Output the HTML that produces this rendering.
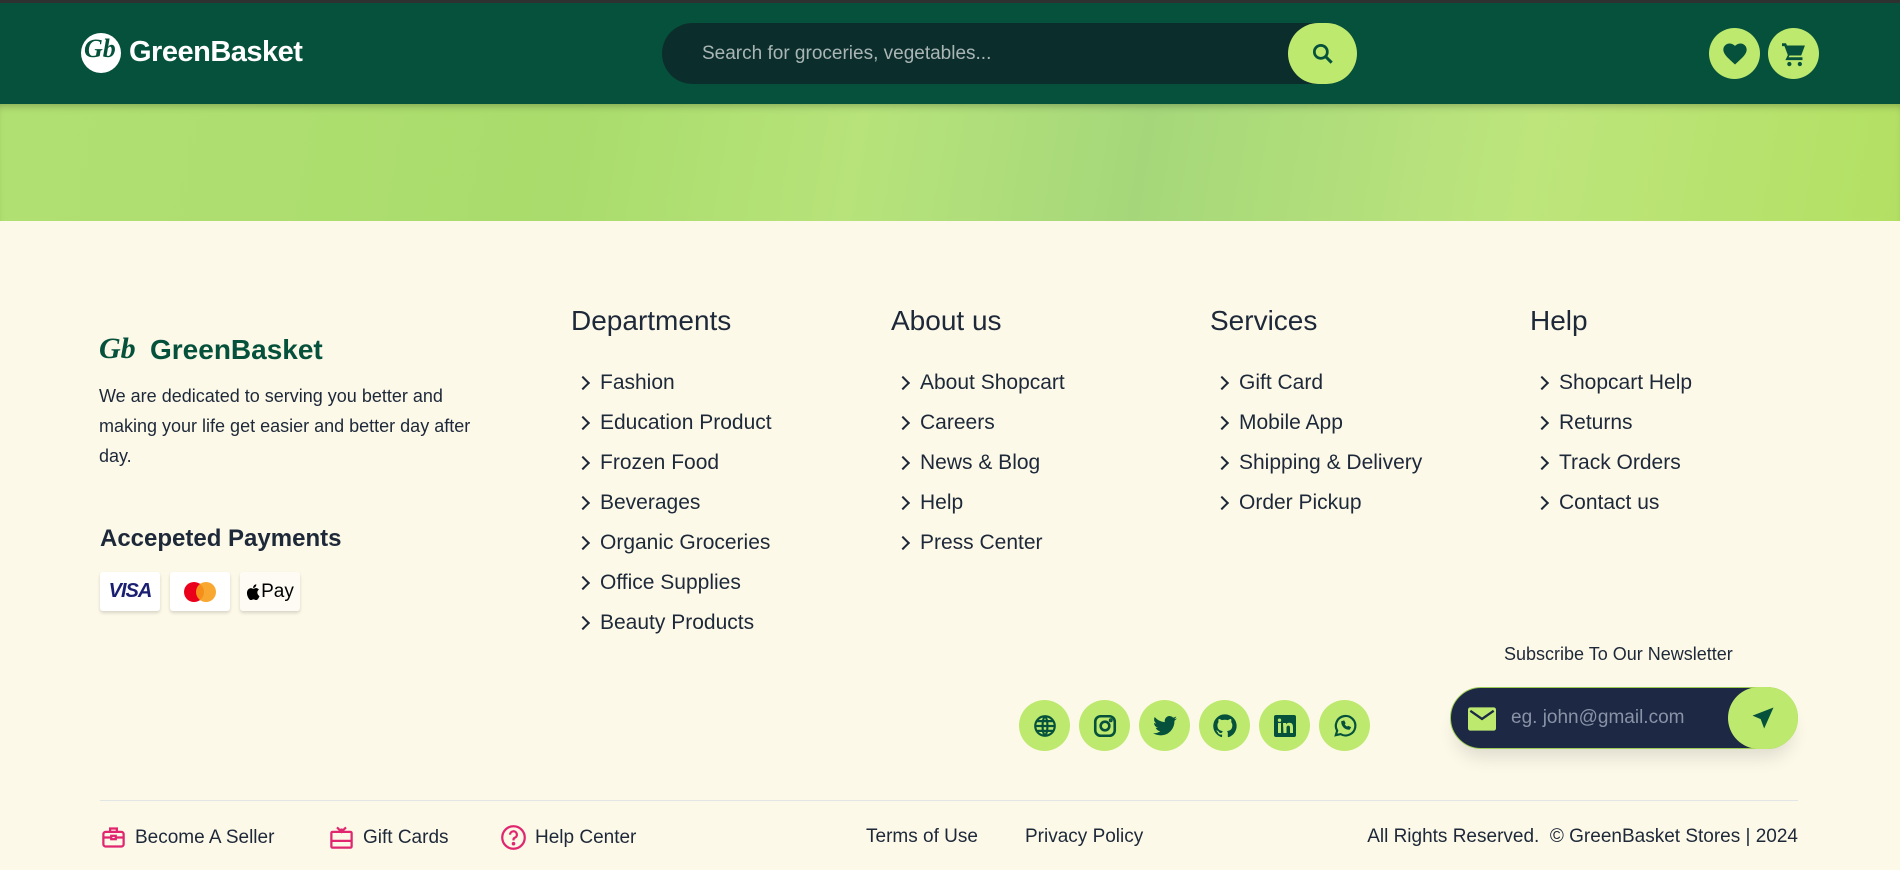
<!DOCTYPE html>
<html><head><meta charset="utf-8"><style>
*{margin:0;padding:0;box-sizing:border-box}
body{width:1900px;height:870px;overflow:hidden;background:#fdf9e9;font-family:"Liberation Sans",sans-serif;color:#1d2838;position:relative}
.abs{position:absolute}
.top{left:0;top:0;width:1900px;height:3px;background:#2d3130}
header{left:0;top:3px;width:1900px;height:101px;background:#06513b}
.banner{left:0;top:104px;width:1900px;height:117px;background:linear-gradient(100deg,#b1e072 0%,#a9dc6c 30%,#b7e37a 45%,#a5d77a 60%,#bde57c 80%,#b3e063 100%);box-shadow:inset 0 6px 8px -4px rgba(0,0,0,.25)}
.search{left:662px;top:23px;width:695px;height:61px;border-radius:31px;background:#0b2e2c}
.search span{position:absolute;left:40px;top:20px;font-size:19px;color:#aab5b5}
.sbtn{left:1288px;top:23px;width:69px;height:61px;border-radius:31px;background:#bde96f;display:flex;align-items:center;justify-content:center}
.circ{border-radius:50%;background:#bde96f;display:flex;align-items:center;justify-content:center}
h3{position:absolute;font-weight:normal;font-size:28px;top:305px}
ul{position:absolute;list-style:none;top:363px;font-size:21px}
li{height:40px;display:flex;align-items:center}
li:before{content:"";width:8px;height:8px;border-right:2px solid #1d2838;border-top:2px solid #1d2838;transform:rotate(45deg);margin:0 12px 0 -3px}
.card{top:572px;width:60px;height:39px;background:#fff;border-radius:3px;box-shadow:0 2px 3px rgba(0,0,0,.15);display:flex;align-items:center;justify-content:center}
.bot{top:824px;font-size:19px;display:flex;align-items:center;gap:8px}
</style></head><body>
<div class="abs top"></div>
<header class="abs"></header>
<div class="abs" style="left:81px;top:33px;width:40px;height:40px;border-radius:50%;background:#fff"></div>
<div class="abs" style="left:84px;top:34px;font-family:'Liberation Serif',serif;font-style:italic;font-weight:bold;font-size:26px;color:#06513b">Gb</div>
<div class="abs" style="left:129px;top:36px;font-size:29px;font-weight:bold;color:#fff;letter-spacing:-0.5px">GreenBasket</div>
<div class="abs search"><span>Search for groceries, vegetables...</span></div>
<div class="abs sbtn"><svg width="26" height="26" viewBox="0 0 24 24"><circle cx="10" cy="10" r="6" fill="none" stroke="#06513b" stroke-width="2.5"/><path d="M14.5 14.5L20 20" stroke="#06513b" stroke-width="2.8"/></svg></div>
<div class="abs circ" style="left:1709px;top:28px;width:51px;height:51px"><svg width="28" height="28" viewBox="0 0 24 24"><path d="M12 21l-1.4-1.3C5.4 15 2 12 2 8.3 2 5.4 4.3 3 7.3 3c1.7 0 3.3.8 4.7 2 1.4-1.2 3-2 4.7-2C19.7 3 22 5.4 22 8.3c0 3.7-3.4 6.7-8.6 11.4z" fill="#06513b"/></svg></div>
<div class="abs circ" style="left:1768px;top:28px;width:51px;height:51px"><svg width="28" height="28" viewBox="0 0 24 24"><path d="M2 3h3l.8 2H21l-3 8H8l-1 2h12v2H5l2-4L4 5H2z M8 19a1.6 1.6 0 1 0 .01 0M17 19a1.6 1.6 0 1 0 .01 0" fill="#06513b" stroke="#06513b" stroke-width=".5"/></svg></div>
<div class="abs banner"></div>

<div class="abs" style="left:99px;top:332px;font-family:'Liberation Serif',serif;font-style:italic;font-weight:bold;font-size:30px;color:#06513b">Gb</div>
<div class="abs" style="left:150px;top:334px;font-size:28px;font-weight:bold;color:#06513b">GreenBasket</div>
<div class="abs" style="left:99px;top:381px;width:395px;font-size:18px;line-height:30px">We are dedicated to serving you better and making your life get easier and better day after day.</div>
<div class="abs" style="left:100px;top:525px;font-size:24px;font-weight:bold">Accepeted Payments</div>
<div class="abs card" style="left:100px"><span style="font-weight:bold;font-style:italic;color:#1a1f71;font-size:20px;letter-spacing:-1px">VISA</span></div>
<div class="abs card" style="left:170px"><svg width="40" height="26"><circle cx="14" cy="13" r="10" fill="#eb001b"/><circle cx="26" cy="13" r="10" fill="#f79e1b" opacity=".9"/></svg></div>
<div class="abs card" style="left:240px;background:#fdfbf3"><svg width="14" height="16" viewBox="0 0 14 17"><path d="M11.6 9c0-2 1.6-2.9 1.7-3-1-1.4-2.4-1.6-2.9-1.6-1.2-.1-2.4.7-3 .7s-1.6-.7-2.6-.7C3.400 4.5 2 5.300 1.300 6.600c-1.500 2.600-.4 6.400 1 8.500.7 1 1.500 2.100 2.600 2 1-.0 1.400-.7 2.700-.7s1.600.7 2.700.7c1.100 0 1.800-1 2.500-2 .8-1.200 1.100-2.300 1.100-2.400 0 0-2.100-.8-2.300-3.700zM9.600 3c.6-.7 1-1.700.9-2.700-.9 0-1.900.6-2.500 1.300-.5.600-1 1.600-.9 2.600 1 .1 1.900-.5 2.500-1.200z" fill="#000"/></svg><span style="font-size:19px;color:#000;margin-left:1px">Pay</span></div>

<h3 style="left:571px">Departments</h3>
<ul style="left:581px"><li>Fashion</li><li>Education Product</li><li>Frozen Food</li><li>Beverages</li><li>Organic Groceries</li><li>Office Supplies</li><li>Beauty Products</li></ul>
<h3 style="left:891px">About us</h3>
<ul style="left:901px"><li>About Shopcart</li><li>Careers</li><li>News &amp; Blog</li><li>Help</li><li>Press Center</li></ul>
<h3 style="left:1210px">Services</h3>
<ul style="left:1220px"><li>Gift Card</li><li>Mobile App</li><li>Shipping &amp; Delivery</li><li>Order Pickup</li></ul>
<h3 style="left:1530px">Help</h3>
<ul style="left:1540px"><li>Shopcart Help</li><li>Returns</li><li>Track Orders</li><li>Contact us</li></ul>

<div class="abs" style="left:1504px;top:644px;font-size:18px">Subscribe To Our Newsletter</div>
<div class="abs" style="left:1450px;top:687px;width:348px;height:62px;border-radius:31px;background:#1c2844;border:1.5px solid #9ccb55;box-shadow:0 14px 18px -6px rgba(0,0,0,.12)">
<svg class="abs" style="left:17px;top:19px" width="28" height="24" viewBox="0 0 24 20"><rect x="0" y="0" width="24" height="20" rx="2" fill="#bde96f"/><path d="M2 3l10 7 10-7" fill="none" stroke="#1c2844" stroke-width="2"/></svg>
<span class="abs" style="left:60px;top:19px;font-size:19px;color:#8a93a6">eg. john@gmail.com</span></div>
<div class="abs circ" style="left:1728px;top:687px;width:70px;height:62px;border-radius:31px"><svg width="28" height="28" viewBox="0 0 24 24"><path d="M21 3L3 10l7 3 3 8z" fill="#06513b"/></svg></div>

<div class="abs circ" style="left:1019px;top:700px;width:51px;height:51px"><svg width="26" height="26" viewBox="0 0 24 24" fill="none" stroke="#06513b" stroke-width="2"><circle cx="12" cy="12" r="9"/><path d="M3 12h18M12 3c3 3 3 15 0 18M12 3c-3 3-3 15 0 18M4.5 7.5h15M4.5 16.5h15"/></svg></div>
<div class="abs circ" style="left:1079px;top:700px;width:51px;height:51px"><svg width="26" height="26" viewBox="0 0 24 24" fill="none" stroke="#06513b" stroke-width="2.4"><rect x="3" y="3" width="18" height="18" rx="5"/><circle cx="12" cy="12" r="4"/><circle cx="17.3" cy="6.7" r=".6" fill="#06513b"/></svg></div>
<div class="abs circ" style="left:1139px;top:700px;width:51px;height:51px"><svg width="26" height="26" viewBox="0 0 24 24"><path d="M23 5c-.8.4-1.7.6-2.6.7.9-.6 1.6-1.4 2-2.5-.9.5-1.9.9-2.9 1.1A4.5 4.5 0 0 0 11.8 8.4 12.8 12.8 0 0 1 2.5 3.7a4.5 4.5 0 0 0 1.4 6c-.7 0-1.4-.2-2-.6 0 2.2 1.6 4 3.6 4.4-.7.2-1.4.2-2 .1.6 1.8 2.2 3.1 4.2 3.1A9 9 0 0 1 1 18.6 12.8 12.8 0 0 0 7.9 20.6c8.3 0 12.8-6.9 12.8-12.8v-.6c.9-.6 1.7-1.4 2.300-2.2z" fill="#06513b"/></svg></div>
<div class="abs circ" style="left:1199px;top:700px;width:51px;height:51px"><svg width="28" height="28" viewBox="0 0 24 24"><path d="M12 2a10 10 0 0 0-3.2 19.5c.5.1.7-.2.7-.5v-1.7c-2.8.6-3.4-1.3-3.4-1.3-.5-1.2-1.1-1.5-1.1-1.5-.9-.6.1-.6.1-.6 1 .1 1.5 1 1.5 1 .9 1.5 2.3 1.1 2.9.8.1-.6.4-1.1.6-1.3-2.2-.3-4.6-1.1-4.6-5 0-1.1.4-2 1-2.7-.1-.3-.4-1.3.1-2.7 0 0 .8-.3 2.8 1a9.6 9.6 0 0 1 5 0c1.9-1.3 2.8-1 2.8-1 .5 1.4.2 2.4.1 2.7.6.7 1 1.6 1 2.7 0 3.9-2.3 4.7-4.6 5 .4.3.7.9.7 1.9V21c0 .3.2.6.7.5A10 10 0 0 0 12 2z" fill="#06513b"/></svg></div>
<div class="abs circ" style="left:1259px;top:700px;width:51px;height:51px"><svg width="24" height="24" viewBox="0 0 24 24"><rect x="1" y="1" width="22" height="22" rx="2" fill="#06513b"/><path d="M5 9h3v10H5zM6.5 4.5a1.7 1.7 0 1 1 0 3.4 1.7 1.7 0 0 1 0-3.4zM10 9h3v1.5c.5-.9 1.6-1.7 3.2-1.7 3.2 0 3.8 2 3.8 4.7V19h-3v-4.8c0-1.2 0-2.6-1.6-2.6s-1.9 1.2-1.9 2.5V19h-3z" fill="#bde96f"/></svg></div>
<div class="abs circ" style="left:1319px;top:700px;width:51px;height:51px"><svg width="26" height="26" viewBox="0 0 24 24" fill="none" stroke="#06513b" stroke-width="2"><path d="M3.5 20.5l1.3-4.2A9 9 0 1 1 8 19.5z"/><path d="M9 8c0 4 3 7 7 7l1-1.6-2-1-1 .8c-1.2-.5-2.3-1.6-2.8-2.8l.8-1-1-2z" fill="#06513b" stroke-width="1"/></svg></div>

<div class="abs" style="left:100px;top:800px;width:1698px;height:1px;background:#e2e5e6"></div>
<div class="abs bot" style="left:100px"><svg width="27" height="27" viewBox="0 0 24 24" fill="none" stroke="#e0266f" stroke-width="2"><rect x="3" y="7" width="18" height="13" rx="2"/><path d="M9 7V4h6v3M3 12h18"/><rect x="10" y="10.5" width="4" height="3" fill="#fdf9e9"/></svg><span>Become A Seller</span></div>
<div class="abs bot" style="left:328px"><svg width="27" height="27" viewBox="0 0 24 24" fill="none" stroke="#e0266f" stroke-width="2"><rect x="3" y="7" width="18" height="14" rx="1"/><path d="M3 15h18M8 3l4 4 4-4M12 7V4"/></svg><span>Gift Cards</span></div>
<div class="abs bot" style="left:500px"><svg width="27" height="27" viewBox="0 0 24 24" fill="none" stroke="#e0266f" stroke-width="2"><circle cx="12" cy="12" r="10"/><path d="M9 9.5a3 3 0 1 1 4 2.8c-.7.3-1 .8-1 1.6v.6"/><circle cx="12" cy="17.5" r=".6" fill="#e0266f"/></svg><span>Help Center</span></div>
<div class="abs bot" style="left:866px;top:826px">Terms of Use</div>
<div class="abs bot" style="left:1025px;top:826px">Privacy Policy</div>
<div class="abs bot" style="right:102px;top:826px">All Rights Reserved.&nbsp; © GreenBasket Stores | 2024</div>
</body></html>
